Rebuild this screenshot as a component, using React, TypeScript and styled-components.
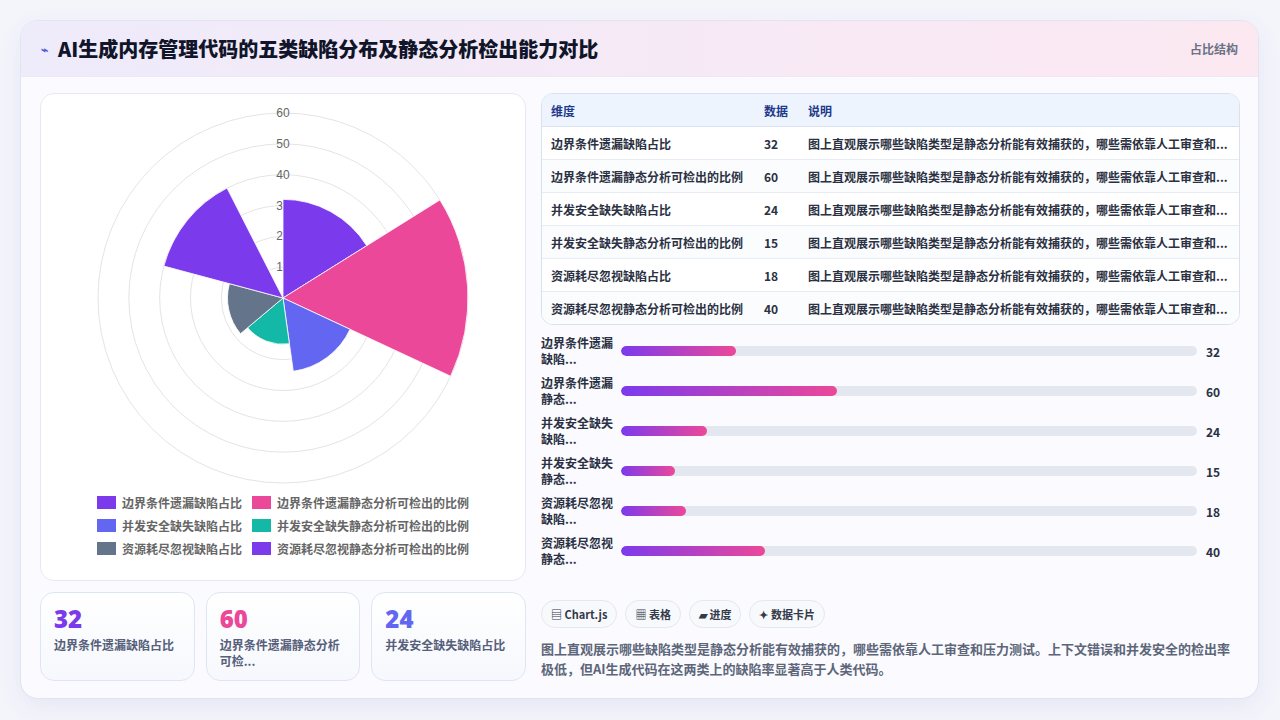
import React from "react";
import styled, { createGlobalStyle } from "styled-components";

const Global = createGlobalStyle`
  html, body { margin: 0; padding: 0; background: #f4f5fb; }
  body { font-family: "Noto Sans CJK SC", "Noto Sans", sans-serif; }
`;

const Page = styled.div`
  width: 1280px; height: 720px; box-sizing: border-box; padding: 20px 21px 21px 20px;
`;
const Card = styled.div`
  height: 100%; box-sizing: border-box; background: #fafaff; border: 1px solid #e3e3f2;
  border-radius: 18px; overflow: hidden; display: flex; flex-direction: column;
  box-shadow: 0 8px 24px rgba(80, 70, 160, 0.08);
`;
const Header = styled.div`
  height: 55px; flex: none; display: flex; align-items: center; justify-content: space-between;
  padding: 0 20px; background: linear-gradient(90deg, #eeebfb, #f7e9f5 60%, #fbe8f1);
  border-bottom: 1px solid #ece8f5;
`;
const Title = styled.h1`
  margin: 0; font-size: 20px; font-weight: 900; color: #111529; display: flex; align-items: center; gap: 10px;
`;
const Spark = styled.span` color: #4f5bd5; font-size: 12px; `;
const Tag = styled.span` font-size: 12px; font-weight: 700; color: #6b7285; `;
const Body = styled.div`
  flex: 1; display: flex; gap: 15px; padding: 16px 18px 18px 19px;
`;
const Left = styled.div` width: 486px; display: flex; flex-direction: column; gap: 11px; `;
const ChartCard = styled.div`
  height: 488px; box-sizing: border-box; background: #fff; border: 1px solid #e6e9f3; border-radius: 14px;
  display: flex; flex-direction: column; align-items: center;
`;
const Legend = styled.div`
  display: grid; grid-template-columns: auto auto; column-gap: 10px; row-gap: 6px;
`;
const LegendItem = styled.div`
  display: flex; align-items: center; gap: 6px; font-size: 12px; color: #666; font-weight: 600;
`;
const Swatch = styled.span<{ c: string }>` width: 19px; height: 13px; background: ${p => p.c}; `;
const Stats = styled.div` display: grid; grid-template-columns: repeat(3, 1fr); gap: 11px; `;
const Stat = styled.div`
  height: 89px; box-sizing: border-box; border: 1px solid #dde6f4; border-radius: 14px;
  background: linear-gradient(180deg, #fff, #f6f8fd); padding: 11px 13px;
`;
const StatNum = styled.div<{ c: string }>`
  font-family: "Open Sans", sans-serif; font-size: 24px; font-weight: 800; color: ${p => p.c}; line-height: 30px;
`;
const StatLabel = styled.div`
  font-size: 12px; color: #56607a; font-weight: 600; line-height: 16px; margin-top: 3px;
`;
const Right = styled.div` flex: 1; display: flex; flex-direction: column; `;
const Table = styled.table`
  width: 100%; border-collapse: separate; border-spacing: 0; border: 1px solid #d9e1ee; border-radius: 12px;
  overflow: hidden; font-size: 12px; font-weight: 700; color: #2b3142; background: #fff;
  th { background: #eef4fe; color: #1e3a8a; text-align: left; height: 32px; padding: 0 9px; border-bottom: 1px solid #d9e1ee; }
  td { height: 32px; padding: 0 9px; border-bottom: 1px solid #e7ecf4; white-space: nowrap; }
  tr:nth-child(even) td { background: #fbfcfe; }
  tr:last-child td { border-bottom: none; }
`;
const Bars = styled.div` display: flex; flex-direction: column; gap: 8px; margin-top: 10px; `;
const BarRow = styled.div` display: flex; align-items: center; height: 32px; `;
const BarLabel = styled.div`
  width: 80px; font-size: 12px; font-weight: 700; color: #2b3142; line-height: 16px;
`;
const Track = styled.div`
  width: 576px; height: 10px; background: #e3e8f0; border-radius: 5px; overflow: hidden;
`;
const Fill = styled.div`
  height: 100%; border-radius: 5px; background: linear-gradient(90deg, #7c3aed, #ec4899);
`;
const BarVal = styled.div` margin-left: 9px; font-size: 12px; font-weight: 700; color: #2b3142; `;
const Chips = styled.div` display: flex; gap: 8px; margin-top: 33px; `;
const Chip = styled.span`
  height: 28px; box-sizing: border-box; padding: 0 9px; border: 1px solid #e5e8ef; border-radius: 14px;
  background: #f8f9fc; font-size: 11px; font-weight: 700; color: #333a4a; display: flex; align-items: center; gap: 4px;
`;
const Desc = styled.p`
  margin: 11px 0 0; font-size: 13px; line-height: 20px; color: #5d6679; font-weight: 700;
`;

const data = [
  { n: "边界条件遗漏缺陷占比", v: 32, c: "#7c3aed", s: "边界条件遗漏\n缺陷..." },
  { n: "边界条件遗漏静态分析可检出的比例", v: 60, c: "#ec4899", s: "边界条件遗漏\n静态..." },
  { n: "并发安全缺失缺陷占比", v: 24, c: "#6366f1", s: "并发安全缺失\n缺陷..." },
  { n: "并发安全缺失静态分析可检出的比例", v: 15, c: "#14b8a6", s: "并发安全缺失\n静态..." },
  { n: "资源耗尽忽视缺陷占比", v: 18, c: "#64748b", s: "资源耗尽忽视\n缺陷..." },
  { n: "资源耗尽忽视静态分析可检出的比例", v: 40, c: "#7c3aed", s: "资源耗尽忽视\n静态..." },
];
const angles = [0, 58, 115, 172, 230, 285, 333];
const desc = "图上直观展示哪些缺陷类型是静态分析能有效捕获的，哪些需依靠人工审查和...";

function Polar() {
  const cx = 242, cy = 204, R = 185;
  const pt = (r: number, deg: number) => {
    const a = (deg * Math.PI) / 180;
    return [cx + r * Math.sin(a), cy - r * Math.cos(a)];
  };
  return (
    <svg width={484} height={400} viewBox="0 0 484 400">
      {[1, 2, 3, 4, 5, 6].map(i => (
        <circle key={i} cx={cx} cy={cy} r={(R * i) / 6} fill="none" stroke="#e4e4e4" strokeWidth={1} />
      ))}
      {[1, 2, 3, 4, 5, 6].map(i => (
        <text key={i} x={cx} y={cy - (R * i) / 6 + 4} textAnchor="middle" fontSize={12}
          fill="#666" fontFamily="Liberation Sans, sans-serif">{i * 10}</text>
      ))}
      {data.map((d, i) => {
        const r = (d.v / 60) * R;
        const [x0, y0] = pt(r, angles[i]), [x1, y1] = pt(r, angles[i + 1]);
        return <path key={i} d={`M${cx},${cy} L${x0},${y0} A${r},${r} 0 0 1 ${x1},${y1} Z`}
          fill={d.c} stroke="#fff" strokeWidth={0.8} />;
      })}
    </svg>
  );
}

export default function App() {
  return (
    <Page>
      <Global />
      <Card>
        <Header>
          <Title><Spark>⌁</Spark>AI生成内存管理代码的五类缺陷分布及静态分析检出能力对比</Title>
          <Tag>占比结构</Tag>
        </Header>
        <Body>
          <Left>
            <ChartCard>
              <Polar />
              <Legend>
                {data.map(d => (
                  <LegendItem key={d.n}><Swatch c={d.c} />{d.n}</LegendItem>
                ))}
              </Legend>
            </ChartCard>
            <Stats>
              <Stat><StatNum c="#7c3aed">32</StatNum><StatLabel>边界条件遗漏缺陷占比</StatLabel></Stat>
              <Stat><StatNum c="#ec4899">60</StatNum><StatLabel>边界条件遗漏静态分析<br />可检...</StatLabel></Stat>
              <Stat><StatNum c="#6366f1">24</StatNum><StatLabel>并发安全缺失缺陷占比</StatLabel></Stat>
            </Stats>
          </Left>
          <Right>
            <Table>
              <thead>
                <tr><th style={{ width: 195 }}>维度</th><th style={{ width: 26 }}>数据</th><th>说明</th></tr>
              </thead>
              <tbody>
                {data.map(d => (
                  <tr key={d.n}><td>{d.n}</td><td>{d.v}</td><td>{desc}</td></tr>
                ))}
              </tbody>
            </Table>
            <Bars>
              {data.map(d => (
                <BarRow key={d.n}>
                  <BarLabel>{d.s.split("\n").map((l, i) => <div key={i}>{l}</div>)}</BarLabel>
                  <Track><Fill style={{ width: `${(d.v / 160) * 100}%` }} /></Track>
                  <BarVal>{d.v}</BarVal>
                </BarRow>
              ))}
            </Bars>
            <Chips>
              <Chip>▤ Chart.js</Chip>
              <Chip>▦ 表格</Chip>
              <Chip>▰ 进度</Chip>
              <Chip>✦ 数据卡片</Chip>
            </Chips>
            <Desc>图上直观展示哪些缺陷类型是静态分析能有效捕获的，哪些需依靠人工审查和压力测试。上下文错误和并发安全的检出率极低，但AI生成代码在这两类上的缺陷率显著高于人类代码。</Desc>
          </Right>
        </Body>
      </Card>
    </Page>
  );
}
